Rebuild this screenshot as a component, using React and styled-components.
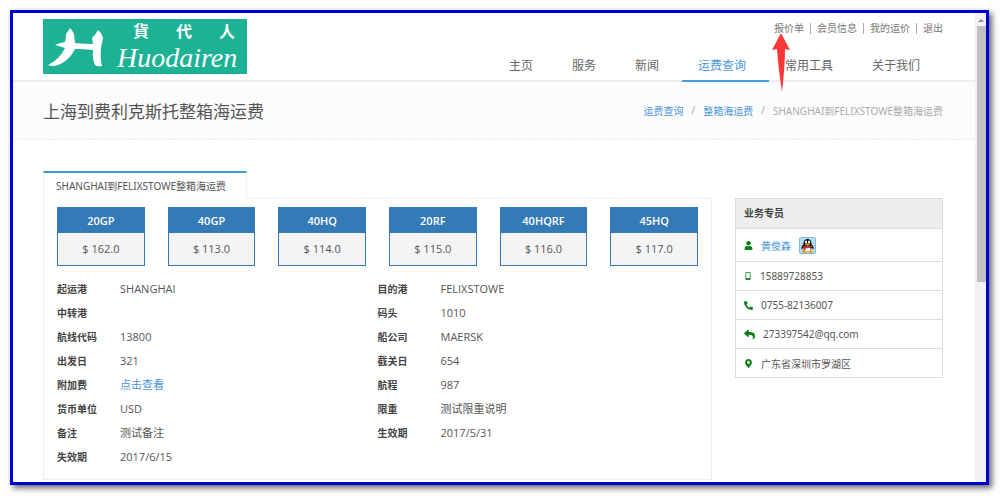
import styled, { createGlobalStyle } from "styled-components";
import { FaMapMarkerAlt, FaMobileAlt, FaPhoneAlt, FaReply, FaUser } from "react-icons/fa";

const userLinks = ["报价单", "会员信息", "我的运价", "退出"];

const menus = ["主页", "服务", "新闻", "运费查询", "常用工具", "关于我们"];

const prices = [
    { type: "20GP", price: "162.0" },
    { type: "40GP", price: "113.0" },
    { type: "40HQ", price: "114.0" },
    { type: "20RF", price: "115.0" },
    { type: "40HQRF", price: "116.0" },
    { type: "45HQ", price: "117.0" },
];

const leftDetails = [
    { label: "起运港", value: "SHANGHAI" },
    { label: "中转港", value: "" },
    { label: "航线代码", value: "13800" },
    { label: "出发日", value: "321" },
    { label: "附加费", value: "点击查看", link: true },
    { label: "货币单位", value: "USD" },
    { label: "备注", value: "测试备注" },
    { label: "失效期", value: "2017/6/15" },
];

const rightDetails = [
    { label: "目的港", value: "FELIXSTOWE" },
    { label: "码头", value: "1010" },
    { label: "船公司", value: "MAERSK" },
    { label: "截关日", value: "654" },
    { label: "航程", value: "987" },
    { label: "限重", value: "测试限重说明" },
    { label: "生效期", value: "2017/5/31" },
];

function DetailList({ items }) {
    return (
        <Details>
            {items.map((item) => (
                <DetailRow key={item.label}>
                    <dt>{item.label}</dt>
                    <dd>{item.link ? <BlueLink href="#surcharge">{item.value}</BlueLink> : item.value}</dd>
                </DetailRow>
            ))}
        </Details>
    );
}

function QQIcon() {
    return (
        <svg width="17" height="17" viewBox="0 0 34 34" role="img" aria-label="QQ">
            <rect x="1" y="1" width="32" height="32" rx="2" fill="#b5dcf3" stroke="#7fb9dc" strokeWidth="2" />
            <ellipse cx="11" cy="29" rx="5" ry="3" fill="#f0a21c" />
            <ellipse cx="23" cy="29" rx="5" ry="3" fill="#f0a21c" />
            <path d="M17 4c-6 0-8 5-8 10-3 3-5 7-4 10 1 1 3-1 4-3 1 5 4 8 8 8s7-3 8-8c1 2 3 4 4 3 1-3-1-7-4-10 0-5-2-10-8-10z" fill="#161616" />
            <ellipse cx="17" cy="24" rx="6" ry="5" fill="#fff" />
            <ellipse cx="14" cy="10" rx="2" ry="3" fill="#fff" />
            <ellipse cx="20" cy="10" rx="2" ry="3" fill="#fff" />
            <ellipse cx="17" cy="15" rx="5" ry="2" fill="#f0a21c" />
            <path d="M8 17c5 3 13 3 18 0v3c-4 2-9 3-13 2v4H9v-6z" fill="#d8281e" />
        </svg>
    );
}

function App() {
    return (
        <>
            <GlobalStyle />
            <Frame>
                <Page>
                    <Header>
                        <Logo href="#home">
                            <svg width="58" height="40" viewBox="0 0 58 40" aria-hidden="true">
                                <path
                                    d="M19 7Q22 3 23 1Q25 3 27 7L28 16Q37 17 46 17L45 11Q49 7 51 3Q54 5 56 11L54 21Q53 31 55 39Q50 40 48 38Q45 31 46 23Q37 22 28 22Q22 34 11 38Q6 40 1 38Q13 32 18 21L8 18Q12 16 18 15Q19 11 19 7Z"
                                    fill="#fff"
                                />
                            </svg>
                            <LogoText>
                                <LogoChinese>
                                    <span>貨</span>
                                    <span>代</span>
                                    <span>人</span>
                                </LogoChinese>
                                <LogoLatin>Huodairen</LogoLatin>
                            </LogoText>
                        </Logo>
                        <HeaderRight>
                            <UserNav>
                                {userLinks.map((text, index) => (
                                    <UserLink key={text} href="#user">
                                        {text}
                                        {index === 0 && (
                                            <Pointer width="20" height="60" viewBox="0 0 20 60" aria-hidden="true">
                                                <path d="M9 0L18 17L13 16Q13 32 10 59Q6 32 5 16L0 17Z" fill="#fb3737" />
                                            </Pointer>
                                        )}
                                    </UserLink>
                                ))}
                            </UserNav>
                            <Menu>
                                {menus.map((text) => (
                                    <MenuLink key={text} href="#menu" $active={text === "运费查询"}>
                                        {text}
                                    </MenuLink>
                                ))}
                            </Menu>
                        </HeaderRight>
                    </Header>
                    <TitleBar>
                        <Title>上海到费利克斯托整箱海运费</Title>
                        <Breadcrumb>
                            <BlueLink href="#query">运费查询</BlueLink>
                            <span>/</span>
                            <BlueLink href="#fcl">整箱海运费</BlueLink>
                            <span>/</span>
                            <em>SHANGHAI到FELIXSTOWE整箱海运费</em>
                        </Breadcrumb>
                    </TitleBar>
                    <Main>
                        <Content>
                            <Tab>SHANGHAI到FELIXSTOWE整箱海运费</Tab>
                            <Panel>
                                <Prices>
                                    {prices.map((item) => (
                                        <PriceCard key={item.type}>
                                            <PriceType>{item.type}</PriceType>
                                            <Price>$ {item.price}</Price>
                                        </PriceCard>
                                    ))}
                                </Prices>
                                <DetailColumns>
                                    <DetailList items={leftDetails} />
                                    <DetailList items={rightDetails} />
                                </DetailColumns>
                            </Panel>
                        </Content>
                        <Contact>
                            <ContactTitle>业务专员</ContactTitle>
                            <ContactRow $tall>
                                <FaUser size={9} />
                                <BlueLink href="#agent">黄俊森</BlueLink>
                                <QQIcon />
                            </ContactRow>
                            <ContactRow>
                                <FaMobileAlt size={8} />
                                15889728853
                            </ContactRow>
                            <ContactRow>
                                <FaPhoneAlt size={9} />
                                0755-82136007
                            </ContactRow>
                            <ContactRow>
                                <FaReply size={11} />
                                273397542@qq.com
                            </ContactRow>
                            <ContactRow>
                                <FaMapMarkerAlt size={9} />
                                广东省深圳市罗湖区
                            </ContactRow>
                        </Contact>
                    </Main>
                </Page>
                <Scrollbar aria-hidden="true">
                    <svg width="11" height="13" viewBox="0 0 11 13">
                        <path d="M3 9L6 6L9 9Z" fill="#8a8a8a" />
                    </svg>
                    <Thumb />
                </Scrollbar>
            </Frame>
        </>
    );
}

export default App;

const GlobalStyle = createGlobalStyle`
    * {
        box-sizing: border-box;
    }

    body {
        margin: 0;
        background: #fefefe;
        color: #555;
        font-family: "Noto Sans", "Noto Sans CJK SC", sans-serif;
        font-size: 10px;
    }

    a {
        text-decoration: none;
    }
`;

const Frame = styled.div`
    display: flex;
    margin: 10px 11px 11px 10px;
    border: 3px solid #0000d0;
    background: #fff;
    box-shadow: 3px 3px 6px rgba(0, 0, 0, 0.6);
`;

const Page = styled.div`
    flex: 1;
    min-width: 0;
`;

const Header = styled.header`
    display: flex;
    justify-content: space-between;
    height: 69px;
    padding: 6px 32px 0 30px;
    border-bottom: 2px solid #eee;
`;

const Logo = styled.a`
    display: flex;
    align-items: center;
    width: 204px;
    height: 55px;
    padding-left: 4px;
    background: #1eb294;
    color: #fff;
`;

const LogoText = styled.div`
    flex: 1;
    display: flex;
    flex-direction: column;
    padding-left: 12px;
`;

const LogoChinese = styled.span`
    display: flex;
    justify-content: space-between;
    padding: 0 12px 0 16px;
    font-family: "Noto Sans CJK TC", sans-serif;
    font-size: 16px;
    font-weight: 700;
    line-height: 23px;
`;

const LogoLatin = styled.span`
    font-family: "Liberation Serif", serif;
    font-size: 28px;
    font-style: italic;
    line-height: 32px;
`;

const HeaderRight = styled.div`
    display: flex;
    flex-direction: column;
    justify-content: space-between;
`;

const UserNav = styled.nav`
    display: flex;
    justify-content: flex-end;
    align-items: center;
    height: 18px;
`;

const UserLink = styled.a`
    position: relative;
    padding: 0 6px;
    color: #777;
    line-height: 11px;

    & + & {
        border-left: 1px solid #aaa;
    }

    &:last-child {
        padding-right: 0;
    }
`;

const Pointer = styled.svg`
    position: absolute;
    top: 10px;
    left: 4px;
    z-index: 1;
`;

const Menu = styled.nav`
    display: flex;
    margin-bottom: -2px;
`;

const MenuLink = styled.a`
    padding: 0 23px 0 16px;
    border-bottom: 2px solid ${(props) => (props.$active ? "#4a9bd9" : "transparent")};
    color: ${(props) => (props.$active ? "#4a9bd9" : "#666")};
    font-size: 12px;
    line-height: 28px;
`;

const TitleBar = styled.section`
    display: flex;
    justify-content: space-between;
    align-items: center;
    height: 58px;
    padding: 0 32px 0 30px;
    border-bottom: 1px dashed #eee;
    background: #fcfcfc;
`;

const Title = styled.h1`
    margin: 0;
    color: #555;
    font-size: 17px;
    font-weight: 400;
`;

const Breadcrumb = styled.nav`
    display: flex;
    gap: 8px;
    color: #aaa;

    em {
        font-style: normal;
    }
`;

const BlueLink = styled.a`
    color: #4a94d8;
`;

const Main = styled.main`
    display: flex;
    align-items: flex-start;
    gap: 23px;
    padding: 31px 32px 2px 30px;
`;

const Content = styled.div`
    flex: 1;
    display: flex;
    flex-direction: column;
    align-items: flex-start;
`;

const Tab = styled.h2`
    z-index: 1;
    width: 204px;
    height: 28px;
    margin: 0 0 -1px;
    padding-left: 12px;
    border: 1px solid #eee;
    border-top: 2px solid #4596cb;
    border-bottom: 0;
    background: #fff;
    font-size: 10px;
    font-weight: 400;
    line-height: 26px;
`;

const Panel = styled.section`
    align-self: stretch;
    padding: 8px 13px 10px;
    border: 1px solid #eee;
`;

const Prices = styled.div`
    display: grid;
    grid-template-columns: repeat(6, 1fr);
    gap: 23px;
    font-family: "Open Sans", sans-serif;
    font-size: 11px;
`;

const PriceCard = styled.div`
    border: 1px solid #337ab7;
    background: #f4f4f4;
    text-align: center;
`;

const PriceType = styled.div`
    background: #337ab7;
    color: #fff;
    font-weight: 600;
    line-height: 25px;
`;

const Price = styled.div`
    line-height: 32px;
`;

const DetailColumns = styled.div`
    display: grid;
    grid-template-columns: 1fr 1fr;
    padding-top: 11px;
`;

const Details = styled.dl`
    margin: 0;
`;

const DetailRow = styled.div`
    display: grid;
    grid-template-columns: 63px 1fr;
    height: 24px;
    line-height: 24px;

    dt {
        color: #444;
        font-weight: 700;
    }

    dd {
        margin: 0;
        font-family: "Open Sans", "Noto Sans CJK SC", sans-serif;
        font-size: 11px;
    }
`;

const Contact = styled.aside`
    width: 208px;
    margin-top: 27px;
    border: 1px solid #ddd;
`;

const ContactTitle = styled.h3`
    margin: 0;
    padding-left: 8px;
    background: #eee;
    color: #444;
    font-size: 10px;
    line-height: 29px;
`;

const ContactRow = styled.div`
    display: flex;
    align-items: center;
    gap: 8px;
    height: ${(props) => (props.$tall ? "33px" : "29px")};
    padding-left: 8px;
    border-top: 1px solid #ddd;

    & > svg:first-child {
        color: #0a8014;
    }
`;

const Scrollbar = styled.div`
    width: 11px;
    background: #f1f1f1;

    svg {
        display: block;
    }
`;

const Thumb = styled.div`
    height: 256px;
    margin-left: 2px;
    background: #c1c1c1;
`;
